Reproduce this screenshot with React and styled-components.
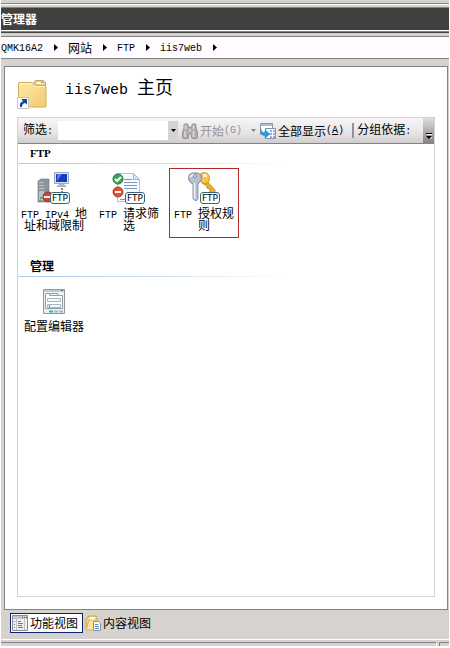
import React from "react";
import styled, { createGlobalStyle } from "styled-components";

const Global = createGlobalStyle`
  * { box-sizing: border-box; }
  body { margin: 0; background: #fff; }
  button, input { font: inherit; color: inherit; border: 0; padding: 0; margin: 0; background: none; }
`;
const cjk = `"Noto Sans CJK SC", sans-serif`;

const Window = styled.main`
  display: flex;
  flex-direction: column;
  min-height: calc(100vh - 2px);
  margin: 0 1px 2px;
  background: #d6d3ce;
  color: #000;
  font: 12px/12px ${cjk};
  overflow: hidden;
`;
const Latin = styled.span`
  font-family: "Liberation Mono", monospace;
  font-size: ${(p) => (p.$large ? "15px" : "10px")};
  white-space: pre;
`;
const TopEdge = styled.div`
  height: 5px;
  margin-bottom: 2px;
  border-bottom: 1px solid #fff;
  box-shadow: inset 0 -1px #848284;
`;
const TitleBar = styled.header`
  height: 24px;
  border-top: 1px solid #848284;
  border-bottom: 1px solid #fff;
  background: #424142;
  color: #fff;
  font-weight: 700;
  line-height: 22px;
`;
const TitleShadow = styled.div`
  height: 2px;
  margin-bottom: 3px;
  background: #424142;
  border-top: 1px solid #848284;
`;
const Breadcrumbs = styled.nav`
  display: flex;
  align-items: center;
  height: 23px;
  border: solid #848284;
  border-width: 1px 0;
  background: #fffcff;
`;
const Crumb = styled.a`
  color: inherit;
  text-decoration: none;
`;
const Arrow = styled.svg`
  width: 4px;
  height: 7px;
  margin: 0 10px 0 11px;
`;
const Panel = styled.section`
  display: flex;
  flex-direction: column;
  flex: 1;
  margin: 7px 1px 0 3px;
  padding: 0 12px 12px;
  border: 1px solid #848284;
  background: #fff;
`;
const PageHead = styled.div`
  display: flex;
  align-items: flex-start;
  height: 50px;
  padding-top: 9px;
`;
const FolderArt = styled.svg`
  width: 32px;
  height: 32px;
  margin-top: 3px;
`;
const Heading = styled.h1`
  margin: 0 0 0 16px;
  font-size: 18px;
  font-weight: 400;
  line-height: 20px;
`;
const Content = styled.div`
  flex: 1;
  border: 1px solid #d6d3ce;
`;
const Toolbar = styled.div`
  display: flex;
  align-items: center;
  height: 26px;
  padding-left: 5px;
  border-bottom: 1px solid #848284;
  background: linear-gradient(#f7f5f5, #e8e4e5 60%, #cfcccd);
  white-space: nowrap;
`;
const Filter = styled.div`
  display: flex;
  flex: 0 0 120px;
  min-width: 0;
  height: 19px;
  margin-left: 5px;
  background: #fff;
`;
const FilterInput = styled.input`
  flex: 1;
  width: 0;
  min-width: 0;
  outline: 0;
`;
const Drop = styled.button`
  width: 10px;
  background: #d6d3ce;
  svg { display: block; margin: auto; }
`;
const Tool = styled.button`
  display: flex;
  align-items: center;
  margin-left: 4px !important;
  color: ${(p) => (p.disabled ? "#949294" : "#000")} !important;
`;
const ToolArt = styled.svg`
  width: 16px;
  height: 16px;
  margin-right: 2px;
`;
const Caret = styled.svg`
  width: 5px;
  height: 3px;
  margin-left: 9px;
`;
const GroupBy = styled.span`
  margin-left: 8px;
  padding-left: 3px;
  border-left: 2px solid #949294;
`;
const Overflow = styled.button`
  align-self: stretch;
  width: 11px;
  margin-left: auto !important;
  padding-top: 12px !important;
  background: linear-gradient(#dedcdd, #848284) !important;
  svg { display: block; margin: auto; }
`;
const GroupTitle = styled.h2`
  height: 20px;
  margin: 0;
  padding-left: 12px;
  font: 700 ${(p) => (p.$latin ? `11px/18px "Liberation Serif", serif` : `12px/18px ${cjk}`)};
  background: linear-gradient(90deg, #a9cbe8, #cfe1f1 35%, #fff 65%) bottom / 100% 1px no-repeat;
`;
const Items = styled.div`
  display: flex;
  gap: 5px;
  min-height: 93px;
  padding: 4px 1px 0;
`;
const Item = styled.button`
  display: flex;
  flex-direction: column;
  align-items: center;
  width: 70px;
  height: 70px;
  padding-top: 2px !important;
  border: 1px solid ${(p) => (p.$selected ? "#b52829" : "transparent")} !important;
  white-space: nowrap;
`;
const ItemArt = styled.svg`
  flex: none;
  width: 34px;
  height: 34px;
  margin-bottom: 2px;
`;
const Label = styled.span`
  display: block;
  height: 12px;
`;
const Tabs = styled.div`
  display: flex;
  align-items: center;
  height: 29px;
  padding: 0 0 3px 9px;
`;
const Tab = styled.button`
  display: flex;
  align-items: center;
  height: 20px;
  padding: 0 4px 0 1px !important;
  border: 1px solid ${(p) => (p.$active ? "#08246b" : "transparent")} !important;
  background: ${(p) => (p.$active ? "#fff" : "transparent")} !important;
`;
const TabArt = styled.svg`
  width: 17px;
  height: 16px;
  margin-right: 1px;
`;
const Status = styled.footer`
  display: flex;
  gap: 2px;
  height: 7px;
  padding-top: 2px;
  border-top: 1px solid #fff;
`;
const StatusCell = styled.div`
  flex: ${(p) => (p.$small ? "0 0 10px" : "1")};
  border-top: 1px solid #848284;
  border-left: ${(p) => (p.$small ? "1px solid #848284" : "0")};
  border-right: ${(p) => (p.$small ? "0" : "1px solid #fff")};
`;

const CrumbArrow = () => <Arrow viewBox="0 0 4 7"><path d="M0 0l4 3.5L0 7z" /></Arrow>;
const Down = () => <svg width="5" height="3" viewBox="0 0 5 3"><path d="M0 0h5L2.5 3z" /></svg>;

const Folder = () => (
  <FolderArt viewBox="0 0 32 32">
    <defs>
      <linearGradient id="folderFront" x2="1" y2="1"><stop stopColor="#ffe9a8" /><stop offset="1" stopColor="#f0cb72" /></linearGradient>
    </defs>
    <path d="M16.500 6V3.500l2-2h8l2 2V8h-12z" fill="#efcc79" stroke="#c9a555" />
    <path d="M20 3h6v2h-6z" fill="#fff" /><path d="M24 3h2v1h-2z" fill="#5795cb" />
    <path d="M1.500 5q0-1.500 1.500-1.500h12l3 3h9.500q1.500 0 1.500 1.500v19q0 1-1 1H2.500q-1 0-1-1z" fill="url(#folderFront)" stroke="#d3ad5c" />
    <path d="M2.500 4.500h12l3 3h10" fill="none" stroke="#fff3c9" />
    <path d="M.5 18.500h11v11H.5z" fill="#fff" stroke="#c4c4c4" />
    <path d="M3 28q-1-5 3-5.500L4.500 20H10v5.500L8 24q-3 .5-3 4z" fill="#1f3f9c" />
  </FolderArt>
);
const Binoculars = () => (
  <ToolArt viewBox="0 0 16 16">
    <path d="M2 1.500q2-1.500 4 0V4h4V1.500q2-1.500 4 0V5l1.500 4v5q0 1.500-1.500 1.500h-3.500q-1 0-1-1V11h-3v3.500q0 1-1 1H2Q.5 15.500.5 14V9L2 5z" fill="#aeacad" stroke="#959394" />
    <path d="M3.500 2v4M11.500 2v4M3 8v6M11.500 8v6" stroke="#dcdadb" strokeWidth="1.500" />
    <path d="M7 6h2v3H7z" fill="#c9c7c8" />
  </ToolArt>
);
const ShowAll = () => (
  <ToolArt viewBox="0 0 16 16">
    <path d="M.5.5h12v11H.5z" fill="#fff" stroke="#8c96a8" /><path d="M1 1h11v2H1z" fill="#a6bddd" />
    <path d="M5.500 5.500h10v10h-10z" fill="#f5faff" stroke="#7e91ba" />
    <path d="M10 8h2m1 0h2M10 11h2m1 0h2M10 14h2m1 0h2" stroke="#8195be" strokeWidth="1.500" />
    <path d="M1 6q0 4 4 3.500V7l5 4-5 4v-2.500Q0 13 1 6z" fill="#2b9ed9" stroke="#187aba" strokeWidth=".5" />
  </ToolArt>
);
const FtpBadge = () => (
  <g>
    <rect x="13.500" y="21.500" width="19" height="11" rx="2.500" fill="#fff" stroke="#316584" />
    <text x="23" y="30" textAnchor="middle" fontFamily="DejaVu Sans" fontSize="9">FTP</text>
  </g>
);
const AddressIcon = () => (
  <ItemArt viewBox="0 0 34 34">
    <path d="M1 10l3-2h8v21l-3 2H1z" fill="#8c9599" stroke="#717b7e" strokeWidth=".6" />
    <path d="M2 11h5v18H2z" fill="#b8c2c4" /><path d="M2 13h5M2 16h5M2 19h5" stroke="#617078" /><path d="M3 26h2v2H3z" fill="#46b84c" />
    <path d="M17.500 1.500h14v11h-14z" fill="#dde3ea" stroke="#9ca8b9" /><path d="M19 3h11v8H19z" fill="#173bc3" /><path d="M20 3h5l-5 7z" fill="#567df0" />
    <path d="M22 13h5l3 3H19z" fill="#adb8c6" /><path d="M25 17v4" stroke="#111" strokeDasharray="2 1" />
    <circle cx="11" cy="26" r="5" fill="#cf3e37" stroke="#ab2c28" /><path d="M7 26h7" stroke="#fff" strokeWidth="2" />
    <FtpBadge />
  </ItemArt>
);
const RequestIcon = () => (
  <ItemArt viewBox="0 0 34 34">
    <path d="M5.500 2.500h16l6 6v22h-22z" fill="#f9fcff" stroke="#b5c2d0" /><path d="M21.500 2.500v6h6z" fill="#dae5ef" stroke="#a8b7c8" />
    <path d="M12 8.500h8M12 11.500h13M12 14.500h13M12 17.500h13M8 28.500h6" stroke="#7599bb" />
    <circle cx="6" cy="8" r="5" fill="#36a657" stroke="#25783d" /><path d="M3 8l2 2 4-4" fill="none" stroke="#fff" strokeWidth="2" />
    <circle cx="6" cy="21" r="5" fill="#e54f2b" stroke="#b33e29" /><path d="M3 21h6" stroke="#fff" strokeWidth="2" />
    <FtpBadge />
  </ItemArt>
);
const KeysIcon = () => (
  <ItemArt viewBox="0 0 34 34">
    <path d="M15 12l4-3 9 10v3h-3l-2-1v-3l-3-1v-2z" fill="#f0ad26" stroke="#b97a16" strokeWidth=".8" />
    <path d="M12 4q3-4 8-2 4 3 2 8l-4 3-6-3z" fill="#f7c64b" stroke="#c98d1f" strokeWidth=".8" />
    <path d="M16 3h4v3h-4z" fill="#fff1bd" />
    <path d="M2 4q3-3 6-2 3-1 6 2 2 5-2 8l-1 1v15l-2 2-3-2V13l-2-1Q0 9 2 4z" fill="#b8bfd0" stroke="#737d95" strokeWidth=".8" />
    <path d="M7.500 12v16" stroke="#eef1f8" strokeWidth="1.500" /><path d="M3 6q2-3 5-2" fill="none" stroke="#fff" strokeWidth="1.500" />
    <circle cx="8" cy="5" r="1.500" fill="#fff" stroke="#737d95" />
    <FtpBadge />
  </ItemArt>
);
const EditorIcon = () => (
  <ItemArt viewBox="0 0 34 34">
    <path d="M6.500 5.500h21v24h-21z" fill="#edf0f3" stroke="#8f969d" /><path d="M7 6h20v2H7z" fill="#c3cbd2" /><path d="M24 6h2v1h-2z" fill="#477691" />
    <path d="M8.500 9.500h4v2h13v13h-17zM12.500 9.500h8v2" fill="#fff" stroke="#8fa1ac" />
    <path d="M10.500 14.500h13v3h-13zM10.500 20.500h13v3h-13z" fill="#f1fbfc" stroke="#a7b6bd" /><path d="M12 21h1v2h-1z" fill="#299dbb" />
    <path d="M12 27.500h4" stroke="#27b3d4" strokeWidth="2" /><path d="M17 27.500h4m1 0h4" stroke="#b1b6b9" strokeWidth="2" />
  </ItemArt>
);
const FeaturesIcon = () => (
  <TabArt viewBox="0 0 17 16">
    <path d="M.5.5h15v15H.5z" fill="#f1f0ee" stroke="#8a8a92" /><path d="M1 1h14v3H1z" fill="#c4c6d2" /><path d="M10 2.500h1m1 0h1m1 0h1" stroke="#4c5482" />
    <path d="M4.500 4v11M12.500 4v11" stroke="#c2c2c4" /><path d="M2 6.500h1M2 9.500h1M2 12.500h1M6 6.500h3M6 8.500h5M6 10.500h4M6 12.500h5" stroke="#77777d" />
  </TabArt>
);
const ContentIcon = () => (
  <TabArt viewBox="0 0 17 16">
    <path d="M1 4l3-3h7l1 2v10H1z" fill="#f7d47d" stroke="#d2a144" /><path d="M5 2h5v3H5z" fill="#fff" /><path d="M1 15L4 5h8l-2 10z" fill="#ffe49c" stroke="#dbb45c" />
    <path d="M8.500 6.500h5l2 2v7h-7z" fill="#fff" stroke="#7f95ab" /><path d="M10 9.500h3M10 11.500h4M10 13.500h4" stroke="#5683b0" />
  </TabArt>
);

export default function App() {
  return (
    <>
      <Global />
      <Window>
        <TopEdge />
        <TitleBar>管理器</TitleBar>
        <TitleShadow />
        <Breadcrumbs>
          <Crumb href="#server"><Latin>QMK16A2</Latin></Crumb><CrumbArrow />
          <Crumb href="#sites">网站</Crumb><CrumbArrow />
          <Crumb href="#ftp"><Latin>FTP</Latin></Crumb><CrumbArrow />
          <Crumb href="#iis7web"><Latin>iis7web</Latin></Crumb><CrumbArrow />
        </Breadcrumbs>
        <Panel>
          <PageHead><Folder /><Heading><Latin $large>iis7web </Latin>主页</Heading></PageHead>
          <Content>
            <Toolbar>
              <label htmlFor="filter">筛选<Latin>:</Latin></label>
              <Filter><FilterInput id="filter" /><Drop aria-label="筛选"><Down /></Drop></Filter>
              <Tool disabled>
                <Binoculars />开始<Latin>(G)</Latin>
                <Caret viewBox="0 0 5 3"><path d="M0 0h5L2.500 3z" fill="#848284" /></Caret>
              </Tool>
              <Tool><ShowAll />全部显示<Latin>(<u>A</u>)</Latin></Tool>
              <GroupBy>分组依据<Latin>:</Latin></GroupBy>
              <Overflow aria-label="分组依据">
                <svg width="6" height="7" viewBox="0 0 6 7"><path d="M0 0h6v1H0zM0 3h6L3 6z" /><path d="M1 1.500h5M4 6l2-2" stroke="#fff" /></svg>
              </Overflow>
            </Toolbar>
            <GroupTitle $latin>FTP</GroupTitle>
            <Items>
              <Item><AddressIcon /><Label><Latin>FTP IPv4 </Latin>地</Label><Label>址和域限制</Label></Item>
              <Item><RequestIcon /><Label><Latin>FTP </Latin>请求筛</Label><Label>选</Label></Item>
              <Item $selected><KeysIcon /><Label><Latin>FTP </Latin>授权规</Label><Label>则</Label></Item>
            </Items>
            <GroupTitle>管理</GroupTitle>
            <Items><Item><EditorIcon /><Label>配置编辑器</Label></Item></Items>
          </Content>
        </Panel>
        <Tabs>
          <Tab $active><FeaturesIcon />功能视图</Tab>
          <Tab><ContentIcon />内容视图</Tab>
        </Tabs>
        <Status><StatusCell /><StatusCell $small /></Status>
      </Window>
    </>
  );
}
